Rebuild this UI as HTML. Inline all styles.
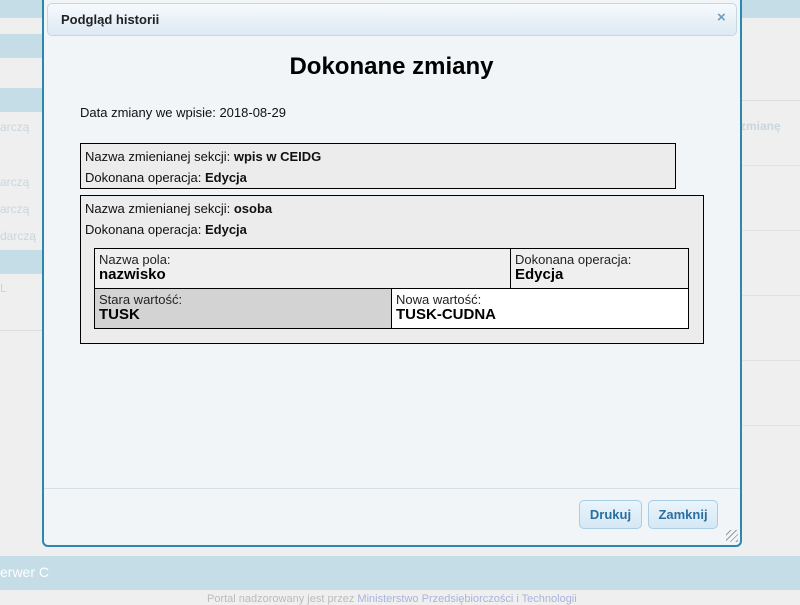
<!DOCTYPE html>
<html><head><meta charset="utf-8"><style>
*{box-sizing:border-box;margin:0;padding:0}
body{width:800px;height:600px;overflow:hidden;background:#efefef;font-family:"Liberation Sans",sans-serif;position:relative}
.a{position:absolute}
.band{background:#c5dde6}
.lt{color:#c8d6de;font-size:12px}
.dlg{left:42px;top:-8px;width:700px;height:555px;border:2px solid #2b87ad;border-radius:6px;background:#f1f5f8}
.tb{left:47px;top:3px;width:690px;height:33px;border:1px solid #c5d7e3;border-radius:5px;background:linear-gradient(#f6fafd,#dde9f3);font-weight:bold;font-size:13px;color:#222;padding:8px 13px}
.box{border:1px solid #000;background:#ececec;font-size:13px;color:#111}
.cell{position:absolute;border:1px solid #000;font-size:13px;padding:3px 4px;color:#222;line-height:15px}
.cell b{font-size:15px;color:#000}
.btn{top:500px;height:29px;border:1px solid #a9cde3;border-radius:5px;background:linear-gradient(#eaf4fb,#d5e8f5);color:#2b6f9e;font-weight:bold;font-size:13px;text-align:center;line-height:27px}
</style></head><body>
<div class="a band" style="left:0;top:0;width:800px;height:18px"></div>
<div class="a band" style="left:0;top:34px;width:60px;height:24px"></div>
<div class="a band" style="left:0;top:88px;width:60px;height:24px"></div>
<div class="a band" style="left:0;top:250px;width:60px;height:24px"></div>
<div class="a" style="left:0;top:330px;width:60px;height:1px;background:#dcdcdc"></div>
<div class="a lt" style="left:0;top:120px">arczą</div>
<div class="a lt" style="left:0;top:175px">arczą</div>
<div class="a lt" style="left:0;top:202px">arczą</div>
<div class="a lt" style="left:0;top:229px">darczą</div>
<div class="a lt" style="left:0;top:281px">L</div>
<div class="a lt" style="left:740px;top:119px;font-weight:bold">zmianę</div>
<div class="a" style="left:740px;top:100px;width:60px;height:1px;background:#dcdcdc"></div>
<div class="a" style="left:740px;top:165px;width:60px;height:1px;background:#e2e2e2"></div>
<div class="a" style="left:740px;top:230px;width:60px;height:1px;background:#e2e2e2"></div>
<div class="a" style="left:740px;top:295px;width:60px;height:1px;background:#e2e2e2"></div>
<div class="a" style="left:740px;top:360px;width:60px;height:1px;background:#e2e2e2"></div>
<div class="a" style="left:740px;top:425px;width:60px;height:1px;background:#e2e2e2"></div>
<div class="a band" style="left:0;top:556px;width:800px;height:34px;color:#fff;font-size:14px;padding:8px 0 0 0">erwer C</div>
<div class="a" style="left:207px;top:593px;font-size:11px;color:#bbb">Portal nadzorowany jest przez <span style="color:#a9b4de">Ministerstwo Przedsiębiorczości i Technologii</span></div>
<div class="a dlg"></div>
<div class="a tb">Podgląd historii</div>
<div class="a" style="left:717px;top:9px;color:#6f9cc0;font-weight:bold;font-size:15px">×</div>
<div class="a" style="left:0;top:53px;width:783px;text-align:center;font-size:24px;font-weight:bold;color:#000">Dokonane zmiany</div>
<div class="a" style="left:80px;top:105px;font-size:13px;color:#111">Data zmiany we wpisie: 2018-08-29</div>
<div class="a box" style="left:80px;top:143px;width:596px;height:46px;padding:2px 4px;line-height:21px">Nazwa zmienianej sekcji: <b>wpis w CEIDG</b><br>Dokonana operacja: <b>Edycja</b></div>
<div class="a box" style="left:80px;top:195px;width:624px;height:149px;padding:2px 4px;line-height:21px">Nazwa zmienianej sekcji: <b>osoba</b><br>Dokonana operacja: <b>Edycja</b></div>
<div class="cell" style="left:94px;top:248px;width:417px;height:41px;background:#efefef">Nazwa pola:<br><b>nazwisko</b></div>
<div class="cell" style="left:510px;top:248px;width:179px;height:41px;background:#efefef">Dokonana operacja:<br><b>Edycja</b></div>
<div class="cell" style="left:94px;top:288px;width:298px;height:41px;background:#d3d3d3">Stara wartość:<br><b>TUSK</b></div>
<div class="cell" style="left:391px;top:288px;width:298px;height:41px;background:#fff">Nowa wartość:<br><b>TUSK-CUDNA</b></div>
<div class="a" style="left:44px;top:488px;width:696px;height:1px;background:#d8dfe4"></div>
<div class="a btn" style="left:579px;width:63px">Drukuj</div>
<div class="a btn" style="left:648px;width:70px">Zamknij</div>
<div class="a" style="left:726px;top:530px;width:12px;height:12px;background:repeating-linear-gradient(135deg,transparent 0 3px,#999 3px 4px)"></div>
</body></html>
